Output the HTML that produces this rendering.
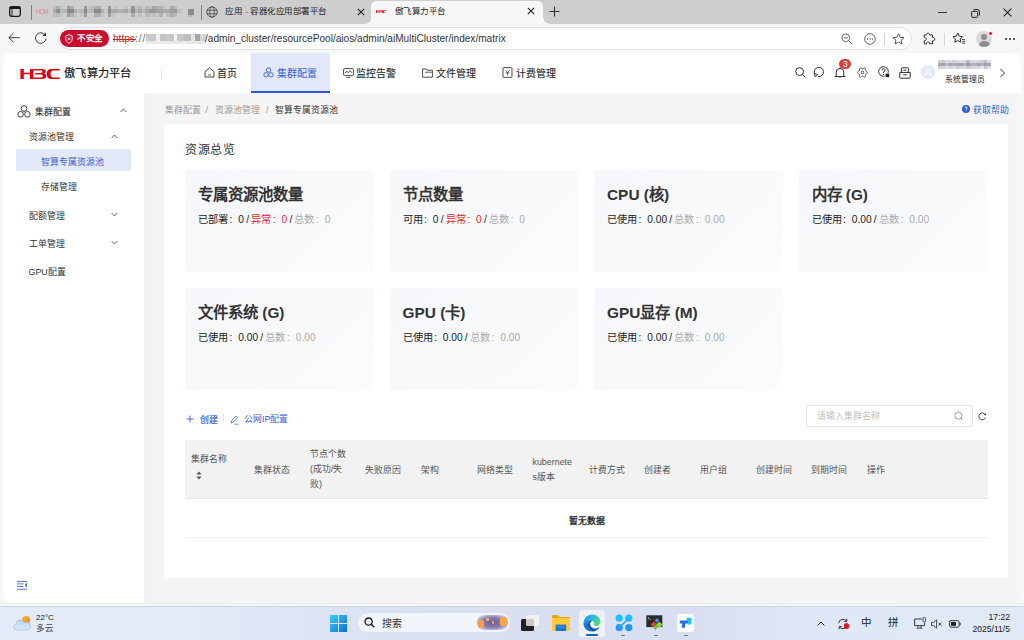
<!DOCTYPE html>
<html lang="zh-CN"><head><meta charset="utf-8">
<style>
*{margin:0;padding:0;box-sizing:border-box}
html,body{width:1024px;height:640px;overflow:hidden;background:#f7f7f7;font-family:"Liberation Sans",sans-serif;color:#333}
.a{position:absolute}
.t{position:absolute;white-space:nowrap;line-height:1}
#tabs{position:absolute;left:0;top:0;width:1024px;height:23.5px;background:#cecece}
#addr{position:absolute;left:0;top:23.5px;width:1024px;height:29.5px;background:#f7f7f7}
.sc{position:absolute;width:188.7px;height:102px;background:linear-gradient(135deg,#f5f7fa 0%,#f8f9fb 50%,#fcfcfd 100%);border-radius:2px}
.st{position:absolute;left:13px;top:16.8px;font-size:15.4px;font-weight:bold;color:#333;white-space:nowrap;line-height:1}
.ss{position:absolute;left:13px;top:45px;font-size:10.2px;color:#222;white-space:nowrap;line-height:1}
.ss .r{color:#f5222d}.ss i{font-style:normal;margin:0 2.2px}.ss u{text-decoration:none;margin:0 6px 0 1.5px}.ss .g{color:#aaa}
.th{position:absolute;font-size:8.9px;color:#555;white-space:nowrap;line-height:1}
</style></head><body>
<!-- TAB STRIP -->
<div id="tabs" class="a">
  <svg class="a" style="left:9px;top:6px" width="12" height="11" viewBox="0 0 12 11"><rect x="0.7" y="0.7" width="10.6" height="9.6" rx="1.8" fill="none" stroke="#1a1a1a" stroke-width="1.3"/><rect x="0.7" y="0.7" width="10.6" height="2.4" rx="1" fill="#1a1a1a"/><line x1="3" y1="3" x2="3" y2="10" stroke="#1a1a1a" stroke-width="0.9"/></svg>
  <div class="a" style="left:31px;top:5px;width:1px;height:15px;background:#808080"></div>
  <div class="t" style="left:35.6px;top:9.2px;font-size:6.3px;color:#e2828c;letter-spacing:-0.3px;transform:scaleX(0.92);transform-origin:0 0">HDM</div>
  <!-- blurred title -->
  <svg class="a" style="left:53px;top:6px;filter:blur(0.45px)" width="128" height="11" viewBox="0 0 128 10.5" shape-rendering="crispEdges"><rect x="0" y="0" width="3.05" height="3" fill="#c0c0c0"/><rect x="0" y="3" width="3.05" height="4" fill="#a9a9a9"/><rect x="0" y="7" width="3.05" height="3.5" fill="#bdbdbd"/><rect x="3" y="0" width="4.05" height="3" fill="#aeaeae"/><rect x="3" y="3" width="4.05" height="4" fill="#8f8f8f"/><rect x="3" y="7" width="4.05" height="3.5" fill="#b9b9b9"/><rect x="7" y="0" width="3.05" height="3" fill="#c4c4c4"/><rect x="7" y="3" width="3.05" height="4" fill="#b8b8b8"/><rect x="7" y="7" width="3.05" height="3.5" fill="#c4c4c4"/><rect x="10" y="0" width="4.05" height="3" fill="#cfcfcf"/><rect x="10" y="3" width="4.05" height="4" fill="#b5b5b5"/><rect x="10" y="7" width="4.05" height="3.5" fill="#cfcfcf"/><rect x="14" y="0" width="3.05" height="3" fill="#a0a0a0"/><rect x="14" y="3" width="3.05" height="4" fill="#8a8a8a"/><rect x="14" y="7" width="3.05" height="3.5" fill="#a2a2a2"/><rect x="17" y="0" width="4.05" height="3" fill="#aeaeae"/><rect x="17" y="3" width="4.05" height="4" fill="#888888"/><rect x="17" y="7" width="4.05" height="3.5" fill="#b2b2b2"/><rect x="21" y="0" width="3.05" height="3" fill="#cfcfcf"/><rect x="21" y="3" width="3.05" height="4" fill="#b0b0b0"/><rect x="21" y="7" width="3.05" height="3.5" fill="#c5c5c5"/><rect x="24" y="0" width="3.05" height="3" fill="#cfcfcf"/><rect x="24" y="3" width="3.05" height="4" fill="#bebebe"/><rect x="24" y="7" width="3.05" height="3.5" fill="#cfcfcf"/><rect x="27" y="0" width="4.05" height="3" fill="#cfcfcf"/><rect x="27" y="3" width="4.05" height="4" fill="#b8b8b8"/><rect x="27" y="7" width="4.05" height="3.5" fill="#c4c4c4"/><rect x="31" y="0" width="3.05" height="3" fill="#989898"/><rect x="31" y="3" width="3.05" height="4" fill="#8c8c8c"/><rect x="31" y="7" width="3.05" height="3.5" fill="#a2a2a2"/><rect x="34" y="0" width="4.05" height="3" fill="#c5c5c5"/><rect x="34" y="3" width="4.05" height="4" fill="#bbbbbb"/><rect x="34" y="7" width="4.05" height="3.5" fill="#cfcfcf"/><rect x="38" y="0" width="3.05" height="3" fill="#bebebe"/><rect x="38" y="3" width="3.05" height="4" fill="#b5b5b5"/><rect x="38" y="7" width="3.05" height="3.5" fill="#cfcfcf"/><rect x="41" y="0" width="4.05" height="3" fill="#b0b0b0"/><rect x="41" y="3" width="4.05" height="4" fill="#8a8a8a"/><rect x="41" y="7" width="4.05" height="3.5" fill="#aeaeae"/><rect x="45" y="0" width="3.05" height="3" fill="#adadad"/><rect x="45" y="3" width="3.05" height="4" fill="#8a8a8a"/><rect x="45" y="7" width="3.05" height="3.5" fill="#afafaf"/><rect x="48" y="0" width="3.05" height="3" fill="#cfcfcf"/><rect x="48" y="3" width="3.05" height="4" fill="#b0b0b0"/><rect x="48" y="7" width="3.05" height="3.5" fill="#c4c4c4"/><rect x="51" y="0" width="4.05" height="3" fill="#cfcfcf"/><rect x="51" y="3" width="4.05" height="4" fill="#c5c5c5"/><rect x="51" y="7" width="4.05" height="3.5" fill="#cfcfcf"/><rect x="55" y="0" width="3.05" height="3" fill="#989898"/><rect x="55" y="3" width="3.05" height="4" fill="#8e8e8e"/><rect x="55" y="7" width="3.05" height="3.5" fill="#a2a2a2"/><rect x="58" y="0" width="4.05" height="3" fill="#cfcfcf"/><rect x="58" y="3" width="4.05" height="4" fill="#aaaaaa"/><rect x="58" y="7" width="4.05" height="3.5" fill="#c3c3c3"/><rect x="62" y="0" width="3.05" height="3" fill="#c0c0c0"/><rect x="62" y="3" width="3.05" height="4" fill="#a8a8a8"/><rect x="62" y="7" width="3.05" height="3.5" fill="#cfcfcf"/><rect x="65" y="0" width="3.05" height="3" fill="#cfcfcf"/><rect x="65" y="3" width="3.05" height="4" fill="#b4b4b4"/><rect x="65" y="7" width="3.05" height="3.5" fill="#cfcfcf"/><rect x="68" y="0" width="3.05" height="3" fill="#cfcfcf"/><rect x="68" y="3" width="3.05" height="4" fill="#b0b0b0"/><rect x="68" y="7" width="3.05" height="3.5" fill="#cfcfcf"/><rect x="71" y="0" width="4.05" height="3" fill="#c3c3c3"/><rect x="71" y="3" width="4.05" height="4" fill="#a5a5a5"/><rect x="71" y="7" width="4.05" height="3.5" fill="#cbcbcb"/><rect x="75" y="0" width="3.05" height="3" fill="#cecece"/><rect x="75" y="3" width="3.05" height="4" fill="#b8b8b8"/><rect x="75" y="7" width="3.05" height="3.5" fill="#cfcfcf"/><rect x="78" y="0" width="4.05" height="3" fill="#989898"/><rect x="78" y="3" width="4.05" height="4" fill="#8f8f8f"/><rect x="78" y="7" width="4.05" height="3.5" fill="#acacac"/><rect x="82" y="0" width="3.05" height="3" fill="#c7c7c7"/><rect x="82" y="3" width="3.05" height="4" fill="#b5b5b5"/><rect x="82" y="7" width="3.05" height="3.5" fill="#cfcfcf"/><rect x="85" y="0" width="4.05" height="3" fill="#b6b6b6"/><rect x="85" y="3" width="4.05" height="4" fill="#a8a8a8"/><rect x="85" y="7" width="4.05" height="3.5" fill="#c1c1c1"/><rect x="89" y="0" width="3.05" height="3" fill="#cfcfcf"/><rect x="89" y="3" width="3.05" height="4" fill="#b8b8b8"/><rect x="89" y="7" width="3.05" height="3.5" fill="#cfcfcf"/><rect x="92" y="0" width="4.05" height="3" fill="#b9b9b9"/><rect x="92" y="3" width="4.05" height="4" fill="#aaaaaa"/><rect x="92" y="7" width="4.05" height="3.5" fill="#bababa"/><rect x="96" y="0" width="3.05" height="3" fill="#bfbfbf"/><rect x="96" y="3" width="3.05" height="4" fill="#999999"/><rect x="96" y="7" width="3.05" height="3.5" fill="#c3c3c3"/><rect x="99" y="0" width="4.05" height="3" fill="#a7a7a7"/><rect x="99" y="3" width="4.05" height="4" fill="#9a9a9a"/><rect x="99" y="7" width="4.05" height="3.5" fill="#bcbcbc"/><rect x="103" y="0" width="3.05" height="3" fill="#afafaf"/><rect x="103" y="3" width="3.05" height="4" fill="#a3a3a3"/><rect x="103" y="7" width="3.05" height="3.5" fill="#c9c9c9"/><rect x="106" y="0" width="4.05" height="3" fill="#b4b4b4"/><rect x="106" y="3" width="4.05" height="4" fill="#a3a3a3"/><rect x="106" y="7" width="4.05" height="3.5" fill="#b0b0b0"/><rect x="110" y="0" width="3.05" height="3" fill="#c4c4c4"/><rect x="110" y="3" width="3.05" height="4" fill="#aaaaaa"/><rect x="110" y="7" width="3.05" height="3.5" fill="#cfcfcf"/><rect x="113" y="0" width="4.05" height="3" fill="#cccccc"/><rect x="113" y="3" width="4.05" height="4" fill="#aaaaaa"/><rect x="113" y="7" width="4.05" height="3.5" fill="#bdbdbd"/><rect x="117" y="0" width="4.05" height="3" fill="#aaaaaa"/><rect x="117" y="3" width="4.05" height="4" fill="#a0a0a0"/><rect x="117" y="7" width="4.05" height="3.5" fill="#aeaeae"/><rect x="121" y="0" width="3.05" height="3" fill="#bababa"/><rect x="121" y="3" width="3.05" height="4" fill="#9a9a9a"/><rect x="121" y="7" width="3.05" height="3.5" fill="#bbbbbb"/><rect x="124" y="0" width="3.55" height="3" fill="#cfcfcf"/><rect x="124" y="3" width="3.55" height="4" fill="#bdbdbd"/><rect x="124" y="7" width="3.55" height="3.5" fill="#cfcfcf"/></svg>
  <div class="a" style="left:188px;top:9px;width:6px;height:6px;background:#8c8c8c;filter:blur(0.5px)"></div><div class="a" style="left:188px;top:15px;width:5px;height:2px;background:#b8b8b8;filter:blur(0.5px)"></div>
  <div class="a" style="left:201px;top:5px;width:1px;height:15px;background:#808080"></div>
  <svg class="a" style="left:206px;top:6px" width="12" height="12" viewBox="0 0 12 12"><g fill="none" stroke="#444" stroke-width="0.8"><circle cx="6" cy="6" r="5.2"/><ellipse cx="6" cy="6" rx="2.3" ry="5.2"/><line x1="0.8" y1="4.2" x2="11.2" y2="4.2"/><line x1="0.8" y1="7.8" x2="11.2" y2="7.8"/></g></svg>
  <div class="t" style="left:224.5px;top:6.8px;font-size:8.5px;color:#1f1f1f">应用</div><div class="a" style="left:244.5px;top:11.5px;width:3.5px;height:1px;background:#999"></div><div class="t" style="left:250px;top:6.8px;font-size:8.5px;letter-spacing:-0.5px;color:#1f1f1f">容器化应用部署平台</div>
  <svg class="a" style="left:357px;top:7.5px" width="8" height="8" viewBox="0 0 8 8"><path d="M0.8 0.8L7.2 7.2M7.2 0.8L0.8 7.2" stroke="#222" stroke-width="1.1"/></svg>
  <!-- active tab -->
  <div class="a" style="left:371px;top:0.5px;width:172px;height:24px;background:#f7f7f7;border-radius:5.5px 5.5px 0 0"></div>
  <div class="a" style="left:365.5px;top:18px;width:5.5px;height:5.5px;background:radial-gradient(circle at 0 0,transparent 5.2px,#f7f7f7 5.8px)"></div>
  <div class="a" style="left:543px;top:18px;width:5.5px;height:5.5px;background:radial-gradient(circle at 100% 0,transparent 5.2px,#f7f7f7 5.8px)"></div>
  <svg class="a" style="left:376.3px;top:9.8px" width="10.5" height="3.3" viewBox="0 0 400 100" preserveAspectRatio="none"><g fill="#e60012"><path d="M4 0H38V37H100V0H133V100H100V52H38V100H4Z"/><path d="M133 0H215C245 0 258 12 258 25C258 35 250 42 240 46C253 50 262 59 262 72C262 89 246 100 215 100H133V84H208C221 84 228 79 228 72C228 63 221 54 208 54H152V39H206C217 39 224 35 224 28C224 21 218 16 206 16H133Z"/><path d="M397 0V15H332C313 15 306 31 306 50C306 69 313 85 332 85H397V100H312C283 100 266 80 266 50C266 20 283 0 312 0Z"/></g></svg>
  <div class="t" style="left:394.5px;top:6.5px;font-size:8.5px;letter-spacing:-0.5px;color:#1f1f1f">傲飞算力平台</div>
  <svg class="a" style="left:527px;top:7px" width="8" height="8" viewBox="0 0 8 8"><path d="M0.8 0.8L7.2 7.2M7.2 0.8L0.8 7.2" stroke="#222" stroke-width="1.1"/></svg>
  <svg class="a" style="left:549px;top:6px" width="11" height="11" viewBox="0 0 11 11"><path d="M5.5 0.5V10.5M0.5 5.5H10.5" stroke="#333" stroke-width="1.1"/></svg>
  <!-- window controls -->
  <div class="a" style="left:938px;top:12px;width:8.5px;height:0.9px;background:#333"></div>
  <svg class="a" style="left:970.5px;top:8.5px" width="9" height="9" viewBox="0 0 9 9"><rect x="0.6" y="2.4" width="6" height="6" rx="1" fill="none" stroke="#222" stroke-width="1"/><path d="M2.4 0.6H6.8A1.6 1.6 0 0 1 8.4 2.2V6.6" fill="none" stroke="#222" stroke-width="1"/></svg>
  <svg class="a" style="left:1003px;top:8px" width="9" height="9" viewBox="0 0 9 9"><path d="M0.6 0.6L8.4 8.4M8.4 0.6L0.6 8.4" stroke="#222" stroke-width="1.1"/></svg>
</div>
<!-- ADDRESS ROW -->
<div id="addr" class="a">
  <svg class="a" style="left:8px;top:8.3px" width="13" height="12" viewBox="0 0 13 12"><path d="M5.6 1L0.9 5.7L5.6 10.4M0.9 5.7H11.8" fill="none" stroke="#333" stroke-width="0.95"/></svg>
  <svg class="a" style="left:33.5px;top:7.5px" width="14" height="14" viewBox="0 0 14 14"><path d="M11.2 4.2A5.3 5.3 0 1 0 12 7.6" fill="none" stroke="#333" stroke-width="0.95"/><path d="M12 1.3V5H8.3Z" fill="#333"/></svg>
  <div class="a" style="left:57.5px;top:3.5px;width:854.5px;height:22.6px;background:#fff;border:1px solid #e1e1e1;border-radius:11.3px"></div>
  <div class="a" style="left:59.5px;top:6.8px;width:49px;height:16.6px;background:#c8102e;border-radius:8.3px"></div>
  <svg class="a" style="left:65px;top:10px" width="8" height="10" viewBox="0 0 8 10"><path d="M4 0.7L7.2 1.9V4.8C7.2 7 5.8 8.5 4 9.3C2.2 8.5 0.8 7 0.8 4.8V1.9Z" fill="none" stroke="#fff" stroke-width="0.9"/><path d="M2.6 3.4L5.4 6.2M5.4 3.4L2.6 6.2" stroke="#fff" stroke-width="0.85"/></svg>
  <div class="t" style="left:77px;top:10.3px;font-size:8.5px;letter-spacing:-0.4px;color:#fff;font-weight:bold">不安全</div>
  <div class="t" style="left:113px;top:10px;font-size:10.1px;color:#c42b1c">https</div>
  <div class="a" style="left:113px;top:15.5px;width:23px;height:1px;background:#c42b1c"></div>
  <div class="t" style="left:135px;top:10px;font-size:10.1px;letter-spacing:0.9px;color:#666">://</div>
  <svg class="a" style="left:146px;top:10.5px;filter:blur(0.5px)" width="60" height="11" viewBox="0 0 60 11" shape-rendering="crispEdges"><rect x="0" y="0" width="10" height="7" fill="#c9c9c9"/><rect x="10" y="0" width="4" height="7" fill="#f0f0f0"/><rect x="14" y="0" width="6" height="7" fill="#c4c4c4"/><rect x="20" y="0" width="3" height="7" fill="#cfc9c4"/><rect x="23" y="0" width="5" height="7" fill="#c6c6c6"/><rect x="28" y="0" width="3" height="7" fill="#f2f2f2"/><rect x="31" y="0" width="7" height="7" fill="#c8c8c8"/><rect x="38" y="0" width="7" height="7" fill="#bdbdbd"/><rect x="45" y="0" width="4" height="7" fill="#e6e3df"/><rect x="49" y="0" width="5" height="7" fill="#a6a6a6"/><rect x="54" y="0" width="6" height="7" fill="#d3d6da"/><rect x="0" y="7" width="60" height="3" fill="#e9e9e9"/></svg>
  <div class="t" style="left:205px;top:10px;font-size:10.1px;color:#333">/admin_cluster/resourcePool/aios/admin/aiMultiCluster/index/matrix</div>
  <svg class="a" style="left:841px;top:9px" width="12" height="12" viewBox="0 0 12 12"><circle cx="4.8" cy="4.8" r="3.9" fill="none" stroke="#555" stroke-width="0.9"/><path d="M2.8 4.8H6.8M7.7 7.7L11 11" stroke="#555" stroke-width="0.9"/></svg>
  <svg class="a" style="left:864px;top:9px" width="12" height="12" viewBox="0 0 12 12"><circle cx="6" cy="6" r="5.3" fill="none" stroke="#555" stroke-width="0.9"/><circle cx="3.6" cy="6" r="0.7" fill="#555"/><circle cx="6" cy="6" r="0.7" fill="#555"/><circle cx="8.4" cy="6" r="0.7" fill="#555"/></svg>
  <div class="a" style="left:884px;top:9px;width:1px;height:13px;background:#d6d6d6"></div>
  <svg class="a" style="left:892px;top:9px" width="13" height="12" viewBox="0 0 13 12"><path d="M6.5 0.8L8.2 4.3L12 4.7L9.1 7.2L10 11L6.5 9L3 11L3.9 7.2L1 4.7L4.8 4.3Z" fill="none" stroke="#444" stroke-width="0.9" stroke-linejoin="round"/></svg>
  <svg class="a" style="left:923px;top:8px" width="13" height="13" viewBox="0 0 13 13"><path d="M5 1.2C6.2 1.2 6.6 2.2 6.5 3H9.5V5.6C10.6 5.4 11.8 5.9 11.8 7.2C11.8 8.5 10.6 9 9.5 8.8V11.8H6.7C6.9 10.8 6.3 9.9 5.1 9.9C3.9 9.9 3.3 10.8 3.5 11.8H1.2V8.8C2.3 9 3.3 8.3 3.3 7.2C3.3 6.1 2.3 5.5 1.2 5.7V3H3.6C3.4 2.2 3.8 1.2 5 1.2Z" fill="none" stroke="#333" stroke-width="1" stroke-linejoin="round"/></svg>
  <div class="a" style="left:944px;top:9px;width:1px;height:13px;background:#d6d6d6"></div>
  <svg class="a" style="left:952px;top:8px" width="14" height="13" viewBox="0 0 14 13"><path d="M5.8 1L7.3 4.2L10.6 4.6L8.2 6.8L8.8 10.2L5.8 8.6L2.8 10.2L3.4 6.8L1 4.6L4.3 4.2Z" fill="none" stroke="#333" stroke-width="1" stroke-linejoin="round"/><path d="M9.8 7.6H13M10.4 9.4H13M9.8 11.2H13" stroke="#333" stroke-width="0.9"/></svg>
  <div class="a" style="left:976px;top:7px;width:16px;height:16px;border-radius:50%;background:#d9d9d9;overflow:hidden">
    <div class="a" style="left:5px;top:3px;width:6px;height:6px;border-radius:50%;background:#8e8e8e"></div>
    <div class="a" style="left:2.5px;top:10px;width:11px;height:9px;border-radius:50%;background:#8e8e8e"></div>
  </div>
  <div class="a" style="left:988px;top:7.5px;width:5px;height:5px;border-radius:50%;background:#e81123;border:0.5px solid #fff"></div>
  <div class="a" style="left:1005px;top:14.5px;width:2px;height:2px;border-radius:50%;background:#222"></div>
  <div class="a" style="left:1009px;top:14.5px;width:2px;height:2px;border-radius:50%;background:#222"></div>
  <div class="a" style="left:1013px;top:14.5px;width:2px;height:2px;border-radius:50%;background:#222"></div>
</div>
<!-- PAGE -->
<div class="a" style="left:3px;top:53px;width:1018px;height:40px;background:#fff;border-radius:8px 8px 0 0"></div>
<div class="a" style="left:3px;top:93px;width:141px;height:509.5px;background:#fff;border-radius:0 0 0 8px"></div>
<div class="a" style="left:144px;top:93px;width:877px;height:509.5px;background:#f5f5f5;border-radius:0 0 8px 0"></div>
<div class="a" style="left:144px;top:93px;width:8px;height:509.5px;background:linear-gradient(90deg,#f1f1f1,#f4f4f4)"></div>
<!-- header -->
<svg class="a" style="left:20px;top:68.8px" width="40" height="10" viewBox="0 0 400 100"><g fill="#e60012">
<path d="M4 0H38V37H100V0H133V100H100V52H38V100H4Z"/>
<path d="M133 0H215C245 0 258 12 258 25C258 35 250 42 240 46C253 50 262 59 262 72C262 89 246 100 215 100H133V84H208C221 84 228 79 228 72C228 63 221 54 208 54H152V39H206C217 39 224 35 224 28C224 21 218 16 206 16H133Z"/>
<path d="M397 0V15H332C313 15 306 31 306 50C306 69 313 85 332 85H397V100H312C283 100 266 80 266 50C266 20 283 0 312 0Z"/>
</g></svg>
<div class="t" style="left:64px;top:67.5px;font-size:11.2px;letter-spacing:0.3px;color:#1a1a1a;-webkit-text-stroke:0.22px #1a1a1a">傲飞算力平台</div>
<div class="a" style="left:161px;top:69px;width:1px;height:10px;background:#e4e4e4"></div>
<svg class="a" style="left:204px;top:67px" width="11" height="11" viewBox="0 0 11 11"><path d="M1 4.6L5.5 1L10 4.6V10H1Z" fill="none" stroke="#333" stroke-width="0.9" stroke-linejoin="round"/><path d="M4 7.6Q5.5 8.8 7 7.6" fill="none" stroke="#333" stroke-width="0.8"/></svg>
<div class="t" style="left:217px;top:68.8px;font-size:10px;color:#262626;-webkit-text-stroke:0.1px #262626">首页</div>
<div class="a" style="left:251px;top:53px;width:79px;height:40px;background:#e2e8f8"></div>
<div class="a" style="left:251px;top:90.5px;width:79px;height:2.5px;background:#2f54d8"></div>
<svg class="a" style="left:263px;top:67px" width="11" height="11" viewBox="0 0 11 11"><g fill="none" stroke="#3b5fd9" stroke-width="0.9"><circle cx="5.5" cy="3" r="2.2"/><circle cx="3" cy="7.8" r="2.2"/><circle cx="8" cy="7.8" r="2.2"/></g></svg>
<div class="t" style="left:277px;top:68.8px;font-size:10px;color:#3b5fd9">集群配置</div>
<svg class="a" style="left:343px;top:67.5px" width="11" height="10" viewBox="0 0 11 10"><rect x="0.6" y="0.6" width="9.8" height="7" rx="1" fill="none" stroke="#333" stroke-width="0.9"/><path d="M2 5L3.8 3.2L5.2 4.8L6.6 2.8L9 4.6M3.5 9.4H7.5" fill="none" stroke="#333" stroke-width="0.8"/></svg>
<div class="t" style="left:356px;top:68.8px;font-size:10px;color:#262626;-webkit-text-stroke:0.1px #262626">监控告警</div>
<svg class="a" style="left:422px;top:67.5px" width="11" height="10" viewBox="0 0 11 10"><path d="M0.6 1H4.2L5.2 2.2H10.4V9.2H0.6Z" fill="none" stroke="#333" stroke-width="0.9" stroke-linejoin="round"/><path d="M3 4.2H10.4" stroke="#333" stroke-width="0.8"/></svg>
<div class="t" style="left:435.5px;top:68.8px;font-size:10px;color:#262626;-webkit-text-stroke:0.1px #262626">文件管理</div>
<svg class="a" style="left:502px;top:67px" width="11" height="11" viewBox="0 0 11 11"><rect x="1" y="0.6" width="9" height="9.8" rx="0.8" fill="none" stroke="#333" stroke-width="0.9"/><path d="M3.4 3.2L5.5 5.4L7.6 3.2M3.6 5.8H7.4M5.5 5.4V8.4" fill="none" stroke="#333" stroke-width="0.8"/></svg>
<div class="t" style="left:515.5px;top:68.8px;font-size:10px;color:#262626;-webkit-text-stroke:0.1px #262626">计费管理</div>
<!-- header right icons -->
<svg class="a" style="left:795px;top:66.8px" width="11" height="11" viewBox="0 0 11 11"><circle cx="4.6" cy="4.6" r="3.9" fill="none" stroke="#222" stroke-width="0.95"/><path d="M7.4 7.4L10.4 10.4" stroke="#222" stroke-width="1"/></svg>
<svg class="a" style="left:813px;top:65.5px" width="12" height="12" viewBox="0 0 12 12"><path d="M1.9 8.3A4.6 4.6 0 1 1 5.2 10.5" fill="none" stroke="#222" stroke-width="0.95"/><path d="M1.1 7.6L2.3 10.9L4.6 8.6Z" fill="none" stroke="#222" stroke-width="0.85" stroke-linejoin="round"/></svg>
<svg class="a" style="left:833.5px;top:67px" width="12" height="11" viewBox="0 0 12 11"><path d="M2.2 9.4V5.2A3.8 3.8 0 0 1 9.8 5.2V9.4M0.6 9.5H11.4M6 0.6V1.6M6 9.5V10.8" fill="none" stroke="#222" stroke-width="0.95"/></svg>
<div class="a" style="left:839px;top:58.5px;width:11.8px;height:10.6px;border-radius:6px;background:#d9403a"></div>
<div class="t" style="left:839.3px;top:59.6px;font-size:8.8px;color:#fff;width:11.8px;text-align:center">3</div>
<svg class="a" style="left:856.5px;top:66.5px" width="11" height="11" viewBox="0 0 11 11"><path d="M10.60 5.50 L10.48 5.94 L10.15 6.32 L9.70 6.63 L9.24 6.86 L8.85 7.06 L8.62 7.30 L8.53 7.62 L8.55 8.06 L8.58 8.58 L8.54 9.12 L8.37 9.60 L8.05 9.92 L7.61 10.03 L7.12 9.94 L6.63 9.70 L6.19 9.41 L5.82 9.19 L5.50 9.10 L5.18 9.19 L4.81 9.41 L4.37 9.70 L3.88 9.94 L3.39 10.03 L2.95 9.92 L2.63 9.60 L2.46 9.12 L2.42 8.58 L2.45 8.06 L2.47 7.62 L2.38 7.30 L2.15 7.06 L1.76 6.86 L1.30 6.63 L0.85 6.32 L0.52 5.94 L0.40 5.50 L0.52 5.06 L0.85 4.68 L1.30 4.37 L1.76 4.14 L2.15 3.94 L2.38 3.70 L2.47 3.38 L2.45 2.94 L2.42 2.42 L2.46 1.88 L2.63 1.40 L2.95 1.08 L3.39 0.97 L3.88 1.06 L4.37 1.30 L4.81 1.59 L5.18 1.81 L5.50 1.90 L5.82 1.81 L6.19 1.59 L6.63 1.30 L7.12 1.06 L7.61 0.97 L8.05 1.08 L8.37 1.40 L8.54 1.88 L8.58 2.42 L8.55 2.94 L8.53 3.38 L8.62 3.70 L8.85 3.94 L9.24 4.14 L9.70 4.37 L10.15 4.68 L10.48 5.06Z" fill="none" stroke="#333" stroke-width="0.85"/><circle cx="5.5" cy="5.5" r="1.3" fill="none" stroke="#333" stroke-width="0.85"/></svg>
<svg class="a" style="left:877.5px;top:66.3px" width="12" height="12" viewBox="0 0 12 12"><circle cx="5.5" cy="5.5" r="4.8" fill="none" stroke="#222" stroke-width="0.95"/><path d="M3.9 4.4A1.6 1.6 0 1 1 5.6 5.9V7" fill="none" stroke="#222" stroke-width="0.9"/><circle cx="5.6" cy="8.4" r="0.55" fill="#222"/><rect x="7.2" y="7.2" width="4.4" height="4.4" rx="1" fill="#222" stroke="#fff" stroke-width="0.8"/></svg>
<svg class="a" style="left:898.5px;top:66.5px" width="12" height="12" viewBox="0 0 12 12"><path d="M0.8 5.4H11.2V10.2A1 1 0 0 1 10.2 11.2H1.8A1 1 0 0 1 0.8 10.2Z" fill="none" stroke="#222" stroke-width="0.95" stroke-linejoin="round"/><path d="M2.4 5.4V1.8A1 1 0 0 1 3.4 0.8H8.6A1 1 0 0 1 9.6 1.8V5.4M4.4 3.2H7.6M4.2 7.8H7.8" fill="none" stroke="#222" stroke-width="0.9"/></svg>
<div class="a" style="left:921px;top:65px;width:14px;height:14px;border-radius:50%;background:#e3e9fb"></div>
<svg class="a" style="left:923px;top:67px" width="10" height="10" viewBox="0 0 10 10"><circle cx="5" cy="3.4" r="2" fill="none" stroke="#fff" stroke-width="0.9"/><path d="M1.8 9A3.2 3.2 0 0 1 8.2 9" fill="none" stroke="#fff" stroke-width="0.9"/></svg>
<svg class="a" style="left:938px;top:60px;filter:blur(0.4px)" width="53" height="9" viewBox="0 0 53 9" shape-rendering="crispEdges"><rect x="0.00" y="0" width="3.58" height="3" fill="#d0d0d6"/><rect x="0.00" y="3" width="3.58" height="3.2" fill="#a8a8ae"/><rect x="0.00" y="6.2" width="3.58" height="2.8" fill="#cfcfd5"/><rect x="3.53" y="0" width="3.58" height="3" fill="#cacad0"/><rect x="3.53" y="3" width="3.58" height="3.2" fill="#a0a0a6"/><rect x="3.53" y="6.2" width="3.58" height="2.8" fill="#d7d7dd"/><rect x="7.07" y="0" width="3.58" height="3" fill="#d7d7dd"/><rect x="7.07" y="3" width="3.58" height="3.2" fill="#b8b8be"/><rect x="7.07" y="6.2" width="3.58" height="2.8" fill="#dddde3"/><rect x="10.60" y="0" width="3.58" height="3" fill="#dadae0"/><rect x="10.60" y="3" width="3.58" height="3.2" fill="#a2a2a8"/><rect x="10.60" y="6.2" width="3.58" height="2.8" fill="#d6d6dc"/><rect x="14.13" y="0" width="3.58" height="3" fill="#d1d1d7"/><rect x="14.13" y="3" width="3.58" height="3.2" fill="#b0b0b6"/><rect x="14.13" y="6.2" width="3.58" height="2.8" fill="#dedee4"/><rect x="17.67" y="0" width="3.58" height="3" fill="#d8d8de"/><rect x="17.67" y="3" width="3.58" height="3.2" fill="#a8a8ae"/><rect x="17.67" y="6.2" width="3.58" height="2.8" fill="#ccccd2"/><rect x="21.20" y="0" width="3.58" height="3" fill="#dfdfe5"/><rect x="21.20" y="3" width="3.58" height="3.2" fill="#a4a4aa"/><rect x="21.20" y="6.2" width="3.58" height="2.8" fill="#d7d7dd"/><rect x="24.73" y="0" width="3.58" height="3" fill="#dadae0"/><rect x="24.73" y="3" width="3.58" height="3.2" fill="#b6b6bc"/><rect x="24.73" y="6.2" width="3.58" height="2.8" fill="#dadae0"/><rect x="28.27" y="0" width="3.58" height="3" fill="#bcbcc2"/><rect x="28.27" y="3" width="3.58" height="3.2" fill="#9c9ca2"/><rect x="28.27" y="6.2" width="3.58" height="2.8" fill="#ccccd2"/><rect x="31.80" y="0" width="3.58" height="3" fill="#d9d9df"/><rect x="31.80" y="3" width="3.58" height="3.2" fill="#aeaeb4"/><rect x="31.80" y="6.2" width="3.58" height="2.8" fill="#d3d3d9"/><rect x="35.33" y="0" width="3.58" height="3" fill="#d9d9df"/><rect x="35.33" y="3" width="3.58" height="3.2" fill="#b4b4ba"/><rect x="35.33" y="6.2" width="3.58" height="2.8" fill="#d9d9df"/><rect x="38.87" y="0" width="3.58" height="3" fill="#d5d5db"/><rect x="38.87" y="3" width="3.58" height="3.2" fill="#a6a6ac"/><rect x="38.87" y="6.2" width="3.58" height="2.8" fill="#d6d6dc"/><rect x="42.40" y="0" width="3.58" height="3" fill="#cfcfd5"/><rect x="42.40" y="3" width="3.58" height="3.2" fill="#b0b0b6"/><rect x="42.40" y="6.2" width="3.58" height="2.8" fill="#e5e5eb"/><rect x="45.93" y="0" width="3.58" height="3" fill="#bfbfc5"/><rect x="45.93" y="3" width="3.58" height="3.2" fill="#9e9ea4"/><rect x="45.93" y="6.2" width="3.58" height="2.8" fill="#c8c8ce"/><rect x="49.47" y="0" width="3.58" height="3" fill="#dadae0"/><rect x="49.47" y="3" width="3.58" height="3.2" fill="#a8a8ae"/><rect x="49.47" y="6.2" width="3.58" height="2.8" fill="#dfdfe5"/></svg>
<div class="t" style="left:945px;top:76px;font-size:7.8px;color:#222">系统管理员</div>
<svg class="a" style="left:999px;top:67.5px" width="7" height="10" viewBox="0 0 7 10"><path d="M1.5 1L5.5 5L1.5 9" fill="none" stroke="#333" stroke-width="1"/></svg>
<!-- sidebar -->
<svg class="a" style="left:17px;top:105px" width="14" height="13" viewBox="0 0 14 13"><g fill="none" stroke="#333" stroke-width="0.95"><circle cx="7" cy="3.5" r="2.8"/><circle cx="3.6" cy="9.3" r="2.8"/><circle cx="10.4" cy="9.3" r="2.8"/></g></svg>
<div class="t" style="left:35px;top:107.6px;font-size:8.9px;color:#333;-webkit-text-stroke:0.12px #333">集群配置</div>
<svg class="a" style="left:119.5px;top:107.5px" width="7" height="5" viewBox="0 0 7 5"><path d="M0.6 4L3.5 1L6.4 4" fill="none" stroke="#555" stroke-width="0.9"/></svg>
<div class="t" style="left:28.5px;top:132.5px;font-size:8.9px;color:#333">资源池管理</div>
<svg class="a" style="left:111px;top:133.5px" width="7" height="5" viewBox="0 0 7 5"><path d="M0.6 4L3.5 1L6.4 4" fill="none" stroke="#555" stroke-width="0.9"/></svg>
<div class="a" style="left:16px;top:149px;width:115px;height:22px;background:#e2e8f8;border-radius:2.5px"></div>
<div class="t" style="left:41px;top:157.5px;font-size:8.9px;color:#3b5fd9">智算专属资源池</div>
<div class="t" style="left:41px;top:183.3px;font-size:8.9px;color:#333">存储管理</div>
<div class="t" style="left:28.5px;top:212.3px;font-size:8.9px;color:#333">配额管理</div>
<svg class="a" style="left:111px;top:212px" width="7" height="5" viewBox="0 0 7 5"><path d="M0.6 1L3.5 4L6.4 1" fill="none" stroke="#555" stroke-width="0.9"/></svg>
<div class="t" style="left:28.5px;top:240.3px;font-size:8.9px;color:#333">工单管理</div>
<svg class="a" style="left:111px;top:240px" width="7" height="5" viewBox="0 0 7 5"><path d="M0.6 1L3.5 4L6.4 1" fill="none" stroke="#555" stroke-width="0.9"/></svg>
<div class="t" style="left:28.5px;top:267.8px;font-size:8.9px;color:#333">GPU配置</div>
<svg class="a" style="left:17px;top:580px" width="10" height="10" viewBox="0 0 10 10"><path d="M0 1.4H10M0 3.9H6.5M0 6.5H6.5M0 9.2H10" stroke="#4d6fdf" stroke-width="0.95"/><path d="M10 2.6L7.6 5.2L10 7.6Z" fill="#4d6fdf"/></svg>
<!-- breadcrumb -->
<div class="t" style="left:164.5px;top:105.6px;font-size:8.9px;color:#999">集群配置</div>
<div class="t" style="left:205.5px;top:105.6px;font-size:8.9px;color:#999">/</div>
<div class="t" style="left:215px;top:105.6px;font-size:8.9px;color:#999">资源池管理</div>
<div class="t" style="left:266px;top:105.6px;font-size:8.9px;color:#999">/</div>
<div class="t" style="left:274.5px;top:105.6px;font-size:8.9px;color:#333">智算专属资源池</div>
<svg class="a" style="left:962px;top:105px" width="8" height="8" viewBox="0 0 8 8"><circle cx="4" cy="4" r="4" fill="#2d5bd8"/><path d="M2.9 3A1.1 1.1 0 1 1 4 4.1V4.8" fill="none" stroke="#fff" stroke-width="0.8"/><circle cx="4" cy="6" r="0.45" fill="#fff"/></svg>
<div class="t" style="left:972.5px;top:105.6px;font-size:8.9px;color:#2d5bd8">获取帮助</div>
<!-- card -->
<div class="a" style="left:164px;top:124px;width:844px;height:454px;background:#fff;border-radius:2px"></div>
<div class="t" style="left:185px;top:143.7px;font-size:12px;letter-spacing:0.5px;color:#333">资源总览</div>
<!-- stat cards -->
<div class="sc" style="left:185px;top:170px"><div class="st">专属资源池数量</div><div class="ss">已部署<u>:</u><span class="v">0</span><i>/</i><span class="r">异常<u>:</u>0</span><i>/</i><span class="g">总数<u>:</u>0</span></div></div>
<div class="sc" style="left:389.5px;top:170px"><div class="st">节点数量</div><div class="ss">可用<u>:</u><span class="v">0</span><i>/</i><span class="r">异常<u>:</u>0</span><i>/</i><span class="g">总数<u>:</u>0</span></div></div>
<div class="sc" style="left:594px;top:170px"><div class="st">CPU (核)</div><div class="ss">已使用<u>:</u><span class="v">0.00</span><i>/</i><span class="g">总数<u>:</u>0.00</span></div></div>
<div class="sc" style="left:798.5px;top:170px"><div class="st">内存 (G)</div><div class="ss">已使用<u>:</u><span class="v">0.00</span><i>/</i><span class="g">总数<u>:</u>0.00</span></div></div>
<div class="sc" style="left:185px;top:288px"><div class="st">文件系统 (G)</div><div class="ss">已使用<u>:</u><span class="v">0.00</span><i>/</i><span class="g">总数<u>:</u>0.00</span></div></div>
<div class="sc" style="left:389.5px;top:288px"><div class="st">GPU (卡)</div><div class="ss">已使用<u>:</u><span class="v">0.00</span><i>/</i><span class="g">总数<u>:</u>0.00</span></div></div>
<div class="sc" style="left:594px;top:288px"><div class="st">GPU显存 (M)</div><div class="ss">已使用<u>:</u><span class="v">0.00</span><i>/</i><span class="g">总数<u>:</u>0.00</span></div></div>
<!-- toolbar -->
<svg class="a" style="left:185.5px;top:415px" width="8" height="8" viewBox="0 0 8 8"><path d="M4 0.5V7.5M0.5 4H7.5" stroke="#3b5fd9" stroke-width="0.9"/></svg>
<div class="t" style="left:200px;top:416px;font-size:8.9px;color:#3b5fd9;-webkit-text-stroke:0.2px #3b5fd9">创建</div>
<div class="a" style="left:223px;top:414px;width:1px;height:9px;background:#e3e3e3"></div>
<svg class="a" style="left:230px;top:414.5px" width="9" height="10" viewBox="0 0 9 10"><path d="M5.8 1L7.6 2.8L3 7.4L1 8L1.6 6Z" fill="none" stroke="#3b5fd9" stroke-width="0.8" stroke-linejoin="round"/><path d="M4.5 9.2H8.5" stroke="#3b5fd9" stroke-width="0.7"/></svg>
<div class="t" style="left:244px;top:415px;font-size:8.9px;color:#3b5fd9">公网IP配置</div>
<div class="a" style="left:806px;top:405px;width:167px;height:21.5px;border:1px solid #e6e6e6;border-radius:2px;background:#fff"></div>
<div class="t" style="left:816.5px;top:412.2px;font-size:8.9px;color:#bfbfbf">请输入集群名称</div>
<svg class="a" style="left:953.5px;top:410.5px" width="10" height="10" viewBox="0 0 10 10"><circle cx="4.4" cy="4.6" r="3.6" fill="none" stroke="#888" stroke-width="0.8"/><path d="M7 7.2L8.4 8.6" stroke="#888" stroke-width="0.8"/></svg>
<svg class="a" style="left:978px;top:411.5px" width="9" height="9" viewBox="0 0 9 9"><path d="M7.2 2.6A3.4 3.4 0 1 0 7.5 5.6" fill="none" stroke="#333" stroke-width="0.9"/><path d="M7.9 0.9L7.9 3.3L5.6 3.1Z" fill="#333"/></svg>
<!-- table -->
<div class="a" style="left:185px;top:440px;width:803px;height:59px;background:#f2f2f2;border-bottom:1px solid #e6e6e6"></div>
<div class="a" style="left:185px;top:537px;width:803px;height:1px;background:#f0f0f0"></div>
<div class="th" style="left:191px;top:455px">集群名称</div>
<svg class="a" style="left:195.5px;top:471px" width="6" height="9" viewBox="0 0 6 9"><path d="M3 0.5L5.6 3.6H0.4Z M3 8.5L5.6 5.4H0.4Z" fill="#555"/></svg>
<div class="th" style="left:254px;top:466px">集群状态</div>
<div class="th" style="left:310px;top:446.8px;line-height:15.2px">节点个数<br>(成功/失<br>败)</div>
<div class="th" style="left:365px;top:466px">失败原因</div>
<div class="th" style="left:421px;top:466px">架构</div>
<div class="th" style="left:477px;top:466px">网络类型</div>
<div class="th" style="left:532.5px;top:454.5px;line-height:15.2px">kubernete<br>s版本</div>
<div class="th" style="left:588.5px;top:466px">计费方式</div>
<div class="th" style="left:644px;top:466px">创建者</div>
<div class="th" style="left:700px;top:466px">用户组</div>
<div class="th" style="left:755.5px;top:466px">创建时间</div>
<div class="th" style="left:811px;top:466px">到期时间</div>
<div class="th" style="left:866.5px;top:466px">操作</div>
<div class="t" style="left:568.5px;top:517px;font-size:8.9px;color:#333;font-weight:bold">暂无数据</div>
<!-- window bottom edge -->
<div class="a" style="left:0;top:603.2px;width:1024px;height:0.8px;background:#e8e8e8"></div>
<!-- TASKBAR -->
<div class="a" style="left:0;top:606.5px;width:1024px;height:33.5px;background:linear-gradient(90deg,#e2ebf7 0%,#e3ebf8 18%,#dde4f4 30%,#dadff0 50%,#d9dff0 68%,#dfe8f6 78%,#e0eaf6 100%)"></div>
<div class="a" style="left:0;top:606px;width:1024px;height:1px;background:#cfd3da"></div>
<svg class="a" style="left:13px;top:615px" width="19" height="16" viewBox="0 0 19 16"><defs><linearGradient id="sun" x1="0" y1="0" x2="1" y2="1"><stop offset="0" stop-color="#fbc02d"/><stop offset="1" stop-color="#f57c00"/></linearGradient><linearGradient id="cl" x1="0" y1="0" x2="0" y2="1"><stop offset="0" stop-color="#b9d3f6"/><stop offset="1" stop-color="#dde9fa"/></linearGradient></defs><circle cx="13" cy="5" r="4" fill="url(#sun)"/><path d="M3.5 15A3.2 3.2 0 0 1 3 8.8A4.6 4.6 0 0 1 11.6 7.4A3.6 3.6 0 0 1 14.6 15Z" fill="url(#cl)" stroke="#8db4ec" stroke-width="0.6"/></svg>
<div class="t" style="left:36px;top:613.5px;font-size:8px;color:#1a1a1a">22°C</div>
<div class="t" style="left:36px;top:624px;font-size:8.5px;color:#444">多云</div>
<!-- start -->
<svg class="a" style="left:330px;top:615px" width="17" height="17" viewBox="0 0 17 17"><defs><linearGradient id="win" x1="0" y1="0" x2="1" y2="1"><stop offset="0" stop-color="#3ccdfb"/><stop offset="1" stop-color="#0a6fd6"/></linearGradient></defs><path d="M0 0H8V8H0Z M9 0H17V8H9Z M0 9H8V17H0Z M9 9H17V17H9Z" fill="url(#win)"/></svg>
<div class="a" style="left:357px;top:612px;width:154px;height:21px;border-radius:10.5px;background:#f1f5fc;border:1px solid #d9e1ee"></div>
<svg class="a" style="left:364px;top:617px" width="11" height="11" viewBox="0 0 11 11"><circle cx="4.6" cy="4.6" r="3.6" fill="none" stroke="#1a1a1a" stroke-width="1.3"/><path d="M7.2 7.2L10.2 10.2" stroke="#1a1a1a" stroke-width="1.5"/></svg>
<div class="t" style="left:382px;top:618.5px;font-size:10px;color:#333">搜索</div>
<div class="a" style="left:477px;top:615px;width:31px;height:15px;border-radius:7px;background:radial-gradient(ellipse at 50% 50%,#6a5a9a 0,#8c7fb0 50%,rgba(200,190,225,0.3) 90%);filter:blur(0.6px)"></div>
<div class="a" style="left:478px;top:620px;width:6px;height:8px;border-radius:2px;background:#f6a04a"></div>
<div class="a" style="left:500px;top:617px;width:7px;height:9px;border-radius:2px;background:#f7a64c"></div>
<div class="a" style="left:486px;top:618px;width:3px;height:3px;border-radius:1px;background:#f5b060"></div>
<div class="a" style="left:492px;top:621px;width:2px;height:3px;border-radius:1px;background:#f5b060"></div>
<!-- task view -->
<div class="a" style="left:521px;top:619px;width:13px;height:12px;border-radius:1.5px;background:#222"></div>
<div class="a" style="left:525.5px;top:615px;width:13px;height:11px;border-radius:1.5px;background:rgba(245,245,245,0.8)"></div>
<!-- explorer -->
<svg class="a" style="left:551.5px;top:615px" width="18" height="16" viewBox="0 0 18 16"><path d="M0 1.2A1.2 1.2 0 0 1 1.2 0H6L7.6 2H18V16H0Z" fill="#e8a700"/><path d="M0 3H18V16H0Z" fill="#ffcb3d"/><path d="M3.6 9.6H14.2V16H3.6Z" fill="#1a73d6"/><path d="M5.6 11.8H12.2" stroke="#5aa0ee" stroke-width="0.9"/></svg>
<!-- edge active -->
<div class="a" style="left:578.7px;top:609.6px;width:26.3px;height:27.1px;border-radius:3.5px;background:#eef1fa"></div>
<svg class="a" style="left:583px;top:614px" width="18" height="18" viewBox="0 0 18 18"><defs><linearGradient id="ea" x1="0" y1="0.2" x2="1" y2="0.7"><stop offset="0" stop-color="#1b8fdc"/><stop offset="0.45" stop-color="#2bb9dd"/><stop offset="1" stop-color="#62dd5e"/></linearGradient><linearGradient id="eb" x1="0" y1="0" x2="0.3" y2="1"><stop offset="0" stop-color="#1c86dc"/><stop offset="1" stop-color="#1668c4"/></linearGradient><linearGradient id="ec" x1="0" y1="0" x2="1" y2="0.5"><stop offset="0" stop-color="#0a4a98"/><stop offset="1" stop-color="#0f5fb4"/></linearGradient></defs>
<path d="M0.5 9.5C0.5 4.5 4.4 0.5 9.2 0.5C13.8 0.5 17.5 3.8 17.5 7.8C17.5 10.6 15.6 12 13.3 12C11.6 12 10.8 11.2 10.8 10.6C11.1 10.2 11.3 9.8 11.3 9.3C11.3 8 10.3 7 9.2 6.9C6.2 6.4 1.8 7.2 0.5 9.5Z" fill="url(#ea)"/>
<path d="M0.5 9.5C1.8 7.2 5 6.2 7.8 6.6C6 7.4 5 9 5 11C5 14.2 7.4 16.8 10.4 17.4C10 17.5 9.6 17.5 9.2 17.5C4.4 17.5 0.5 14 0.5 9.5Z" fill="url(#eb)"/>
<path d="M7.8 6.6C8.3 6.6 8.8 6.7 9.2 6.9C8 7.3 7.1 8.4 7.1 9.8C7.1 12.6 9.4 14.6 12.4 14.6C14 14.6 15.6 14 16.8 12.8C15.6 15.6 13 17.4 10.4 17.4C7.4 16.8 5 14.2 5 11C5 9 6 7.4 7.8 6.6Z" fill="url(#ec)"/>
<circle cx="9.3" cy="9.5" r="1.75" fill="#f3f6fc"/>
</svg>
<div class="a" style="left:586.4px;top:634.3px;width:11.2px;height:2.2px;border-radius:1.1px;background:#0f6cbd"></div>
<!-- app 4 circles -->
<svg class="a" style="left:614.5px;top:614px" width="18" height="18" viewBox="0 0 18 18"><circle cx="4.2" cy="4.2" r="3.6" fill="#19c3fb"/><circle cx="13.8" cy="4.2" r="3.6" fill="#19c3fb"/><circle cx="4.2" cy="13.6" r="3.6" fill="#2196f3"/><circle cx="13.8" cy="13.6" r="3.6" fill="#2196f3"/><path d="M4.2 13.6L13.8 4.2" stroke="#2aa8f5" stroke-width="1.6"/></svg>
<div class="a" style="left:621px;top:634.5px;width:3.5px;height:1.5px;border-radius:1px;background:#777"></div>
<!-- terminal -->
<svg class="a" style="left:646px;top:614.5px" width="18" height="17" viewBox="0 0 18 17"><rect x="0.3" y="0.3" width="16" height="11.8" fill="#2b2b2b"/><path d="M1.8 2L3.2 3.2L1.8 4.4M3.6 4.6H5" stroke="#ddd" stroke-width="0.6" fill="none"/><path d="M4.6 9.6L8 6.4L10.4 8.8L7 12Z" fill="#e8413c"/><path d="M8.6 5.2L11.2 3L13.4 5.4L10.6 7.8Z" fill="#4a8fe8"/><path d="M10 9.6L13.2 6.6L16.6 9.8L13.2 13L11.6 11.4Z" fill="#8ed43a"/><path d="M7 12L10 9.6L11.6 11.4L9.6 15.4Z" fill="#6fbf2f"/></svg>
<div class="a" style="left:654px;top:634.5px;width:3.5px;height:1.5px;border-radius:1px;background:#777"></div>
<!-- app 3 -->
<div class="a" style="left:677px;top:614px;width:17px;height:17.5px;border-radius:3px;background:#fff"></div>
<svg class="a" style="left:678px;top:615px" width="15" height="15" viewBox="0 0 15 15"><path d="M8.6 2.8H13.8L13 9.6H9.4Z" fill="#19c8e0"/><path d="M2 5.4H9.8L9.4 8.6H7.4L6.8 12.8H3.6L4.2 8.6H1.6Z" fill="#1f6fe8"/></svg>
<div class="a" style="left:684px;top:634.5px;width:3.5px;height:1.5px;border-radius:1px;background:#777"></div>
<!-- tray -->
<svg class="a" style="left:816.5px;top:620.5px" width="8" height="5" viewBox="0 0 8 5"><path d="M0.6 4.4L4 1L7.4 4.4" fill="none" stroke="#222" stroke-width="1"/></svg>
<svg class="a" style="left:837px;top:617.5px" width="12" height="12" viewBox="0 0 12 12"><path d="M1.6 5.2A4.4 4.4 0 0 1 9.6 3.2M10.4 6.8A4.4 4.4 0 0 1 2.4 8.8" fill="none" stroke="#222" stroke-width="0.9"/><path d="M9.8 0.8V3.4H7.2M2.2 11.2V8.6H4.8" fill="none" stroke="#222" stroke-width="0.9"/></svg>
<div class="a" style="left:843.5px;top:623.3px;width:5.5px;height:5.5px;border-radius:50%;background:#e81123"></div>
<div class="t" style="left:860.5px;top:617px;font-size:10.5px;color:#222">中</div>
<div class="t" style="left:887.5px;top:617px;font-size:10.5px;color:#222">拼</div>
<svg class="a" style="left:914px;top:617px" width="12" height="12" viewBox="0 0 12 12"><path d="M8 2H0.6V8.6H10.6V6" fill="none" stroke="#222" stroke-width="0.9"/><rect x="9" y="0.5" width="2.6" height="4.6" rx="1" fill="none" stroke="#222" stroke-width="0.8"/><path d="M4 8.6V10.8M7 8.6V10.8M2.6 11.2H8.4" stroke="#222" stroke-width="0.8"/></svg>
<svg class="a" style="left:931px;top:618.5px" width="12" height="10" viewBox="0 0 12 10"><path d="M0.6 3.4H2.6L5.6 0.8V9.2L2.6 6.6H0.6Z" fill="none" stroke="#222" stroke-width="0.8" stroke-linejoin="round"/><path d="M7.6 3.6L10.6 6.6M10.6 3.6L7.6 6.6" stroke="#222" stroke-width="0.8"/></svg>
<svg class="a" style="left:948.5px;top:619.5px" width="12" height="8" viewBox="0 0 12 8"><rect x="0.5" y="0.6" width="9.6" height="6.6" rx="1.6" fill="none" stroke="#222" stroke-width="0.9"/><rect x="2" y="2" width="5" height="3.8" fill="#222"/><rect x="10.6" y="2.6" width="1" height="2.6" fill="#222"/></svg>
<div class="t" style="left:960px;width:50px;text-align:right;top:612.8px;font-size:8.6px;color:#1a1a1a">17:22</div>
<div class="t" style="left:940px;width:70px;text-align:right;top:624.5px;font-size:8.6px;color:#1a1a1a">2025/11/5</div>
</body></html>
